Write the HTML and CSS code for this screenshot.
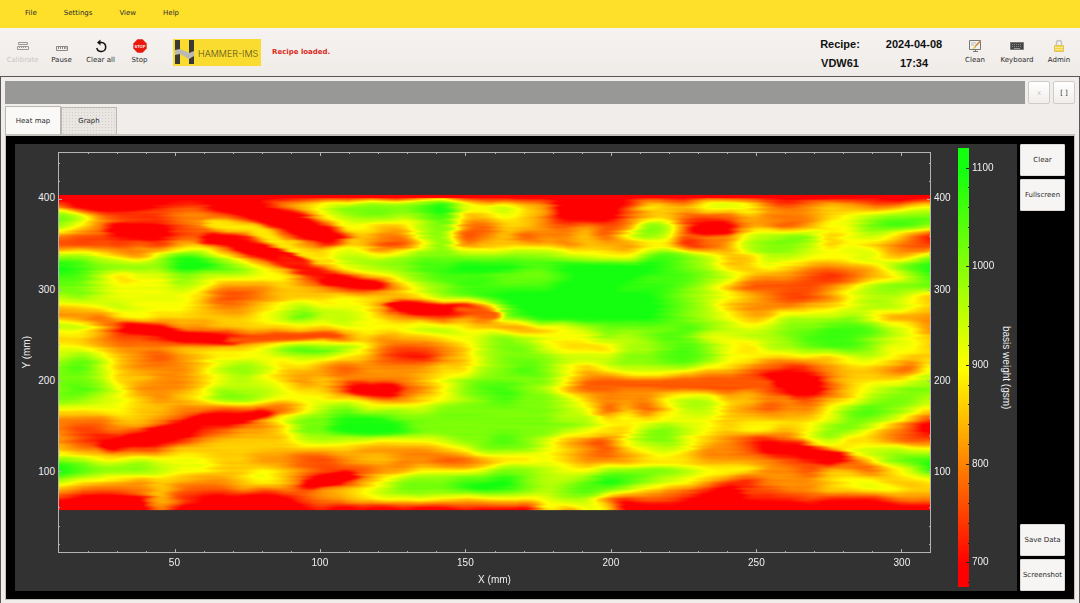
FILE: index.html
```html
<!DOCTYPE html>
<html lang="en">
<head>
    <meta charset="UTF-8">
    <meta name="viewport" content="width=device-width, initial-scale=1.0">
    <title>Hammer-IMS</title>
    <link rel="stylesheet" href="styles.css">
</head>
<body>
    <!-- Menu -->
    <nav class="menu-bar">
        <button type="button">File</button>
        <button type="button">Settings</button>
        <button type="button">View</button>
        <button type="button">Help</button>
    </nav>

    <!-- Toolbar -->
    <header class="toolbar">
        <div class="tools">
            <button type="button" class="tool" disabled>
                <svg width="14" height="14" viewBox="0 0 14 14" fill="none" stroke="#9a9896">
                    <path d="M2.5 3.5h9v2h-9zM1.500 7.500h11v3h-11z"/>
                    <path d="M3.500 7.500v1.500M5.500 7.500v1.500M7.500 7.500v1.500M9.500 7.500v1.500"/>
                </svg>
                <span>Calibrate</span>
            </button>
            <button type="button" class="tool">
                <svg width="14" height="14" viewBox="0 0 14 14" fill="none" stroke="#8a8886">
                    <path d="M1.500 7.500h11v4h-11z"/>
                    <path d="M3.500 8v2M5.500 8v2M7.500 8v2M9.500 8v2M11 8v2"/>
                </svg>
                <span>Pause</span>
            </button>
            <button type="button" class="tool">
                <svg width="14" height="14" viewBox="0 0 14 14" fill="none" stroke="#111" stroke-width="1.500">
                    <path d="M6 3.500h1.500a4.500 4.500 0 1 1-4.700 5.500"/>
                    <path d="M6.500 .4v6.200L3 3.500z" fill="#111" stroke="none"/>
                </svg>
                <span>Clear all</span>
            </button>
            <button type="button" class="tool">
                <svg width="14" height="14" viewBox="0 0 14 14">
                    <path d="M4.500.3h5l4.200 4.200v5l-4.200 4.200h-5L.3 9.500v-5z" fill="#e8180c"/>
                    <text class="stop-sign" x="7" y="9" text-anchor="middle">STOP</text>
                </svg>
                <span>Stop</span>
            </button>
        </div>

        <div class="logo">
            <svg width="22" height="26" viewBox="0 0 22 26">
                <path d="M2 1h5v24H2zM16 1h5v24h-5z" fill="#3a3935"/>
                <path d="M2 11l5-1 9 4 5-2v5l-5 3-9-5-5 1z" fill="#b9b8b2"/>
            </svg>
            <span>HAMMER-IMS</span>
        </div>

        <p class="message">Recipe loaded.</p>

        <div class="info">
            <span>Recipe:</span>
            <span>VDW61</span>
        </div>
        <div class="info date">
            <span>2024-04-08</span>
            <span>17:34</span>
        </div>

        <div class="tools tools-right">
            <button type="button" class="tool">
                <svg width="14" height="14" viewBox="0 0 14 14">
                    <path d="M1.500 1.500h11v9h-11z" fill="#f3f2ee" stroke="#777"/>
                    <path d="M5 12.500h5M7.500 10.500v2" stroke="#777"/>
                    <path d="M3 4h5M3 6h3" stroke="#bbb"/>
                    <path d="M12.500 2L7 7.500" stroke="#c9802f" stroke-width="1.500"/>
                    <path d="M7.500 6.500L4 10l4-1z" fill="#e4bd4a"/>
                </svg>
                <span>Clean</span>
            </button>
            <button type="button" class="tool">
                <svg width="14" height="14" viewBox="0 0 14 14">
                    <path d="M.5 3.500h13v7H.5z" fill="#454545" stroke="#777"/>
                    <path d="M2 5.500h10M2 7.500h10" stroke="#888" stroke-dasharray="1 1"/>
                    <path d="M4 9.500h6" stroke="#999"/>
                </svg>
                <span>Keyboard</span>
            </button>
            <button type="button" class="tool">
                <svg width="14" height="14" viewBox="0 0 14 14">
                    <path d="M4.500 7V4a2.500 2.500 0 0 1 5 0V7" fill="none" stroke="#c4c2bd" stroke-width="1.500"/>
                    <path d="M2.500 6.500h9v6h-9z" fill="#f5d441" stroke="#dfc463"/>
                    <path d="M3 8.500h8M3 10.500h8" stroke="#fae98b"/>
                </svg>
                <span>Admin</span>
            </button>
        </div>
    </header>

    <!-- Work area -->
    <main class="workspace">
        <div class="status-row">
            <div class="status-strip"></div>
            <button type="button" disabled>x</button>
            <button type="button">[ ]</button>
        </div>

        <div class="tabs" role="tablist">
            <button type="button" class="tab active" role="tab" aria-selected="true">Heat map</button>
            <button type="button" class="tab" role="tab" aria-selected="false">Graph</button>
        </div>

        <section class="view">
            <div class="plot">
                <div class="axis-title y-title">Y (mm)</div>
                <div class="axis y-axis y-left"></div>
                <canvas class="field" id="field" width="871" height="400"></canvas>
                <div class="axis y-axis y-right"></div>
                <div class="axis x-axis"></div>
                <div class="axis-title x-title">X (mm)</div>
                <canvas class="scale" id="scale" width="11" height="439"></canvas>
                <div class="axis scale-axis"></div>
                <div class="axis-title scale-title">basis weight (gsm)</div>
            </div>
            <div class="actions">
                <button type="button">Clear</button>
                <button type="button">Fullscreen</button>
                <button type="button" class="push-down">Save Data</button>
                <button type="button">Screenshot</button>
            </div>
        </section>
    </main>

    <script src="heatmap.js"></script>
</body>
</html>
```
FILE: styles.css
```css
* {
    margin: 0;
    padding: 0;
    box-sizing: border-box;
}

body {
    display: flex;
    flex-direction: column;
    height: 100vh;
    overflow: hidden;
    font-family: "DejaVu Sans", sans-serif;
    font-size: 7px;
    color: #2b2b2b;
    background-color: #f0edea;
}

button {
    font: inherit;
    color: inherit;
    border: none;
    background: none;
    cursor: pointer;
}

/* Menu */
.menu-bar {
    display: flex;
    gap: 25px;
    height: 28px;
    flex: none;
    padding: 0 24px 3px;
    background-color: #fee02b;
}

.menu-bar button {
    padding: 0 1px;
}

/* Toolbar */
.toolbar {
    display: flex;
    align-items: center;
    height: 48px;
    flex: none;
    padding-left: 3px;
    background: linear-gradient(#f5f2f0, #efece8);
}

.tools {
    display: flex;
}

.tool {
    display: flex;
    flex-direction: column;
    align-items: center;
    gap: 2px;
    width: 39px;
    white-space: nowrap;
}

.tool span {
    line-height: 10px;
}

.tool:disabled {
    color: #c9c6c3;
}

.stop-sign {
    font: bold 4px "Liberation Sans", sans-serif;
    fill: #fff;
}

.logo {
    display: flex;
    align-items: center;
    gap: 3px;
    width: 88px;
    height: 27px;
    margin-left: 14px;
    font-family: Inter, sans-serif;
    font-size: 9px;
    font-weight: 300;
    line-height: 27px;
    white-space: nowrap;
    color: #57501f;
    background-color: #fadb30;
}

.logo svg {
    flex: none;
}

.logo span {
    padding-top: 3px;
}

.message {
    margin-left: 11px;
    font-weight: bold;
    color: #dc2a22;
}

.info {
    display: flex;
    flex-direction: column;
    align-items: center;
    gap: 3px;
    width: 68px;
    padding-top: 2px;
    margin-left: auto;
    font-family: "Liberation Sans", sans-serif;
    font-size: 11px;
    font-weight: bold;
    line-height: 16px;
    color: #111;
}

.date {
    width: 80px;
    margin-left: 0;
}

.tools-right .tool {
    width: 42px;
}

/* Work area */
.workspace {
    display: flex;
    flex-direction: column;
    flex: 1;
    min-height: 0;
    padding: 4px 4px 3px;
    border: 1px solid #5a5856;
    border-bottom: none;
}

.status-row {
    display: flex;
    gap: 3px;
    height: 23px;
    flex: none;
}

.status-strip {
    flex: 1;
    background-color: #989896;
}

.status-row button {
    width: 22px;
    border: 1px solid #cfccc8;
    border-radius: 2px;
    background: linear-gradient(#fff, #f1eeeb);
}

.status-row button:disabled {
    color: #c9c6c3;
}

.tabs {
    display: flex;
    align-items: flex-end;
    height: 31px;
    flex: none;
    border-bottom: 1px solid #c4c1bd;
}

.tab {
    width: 56px;
    height: 27px;
    border: 1px solid #bab7b3;
    border-bottom: none;
    background: radial-gradient(#d3d0cb 25%, transparent 30%) 0 0 / 3px 3px #e9e6e2;
}

.tab.active {
    height: 28px;
    background: #fbf9f8;
}

/* Plot and its buttons */
.view {
    display: flex;
    gap: 3px;
    flex: 1;
    min-height: 0;
    padding: 8px 9px 8px;
    border: 1px solid #c4c1bd;
    background-color: #000;
}

.plot {
    display: grid;
    grid-template-columns: 23px 20px 1fr 27px 11px 26px 22px;
    grid-template-rows: 4px 4px 1fr 4px 16px 14px 4px;
    flex: 1;
    min-width: 0;
    font-family: "Liberation Sans", sans-serif;
    font-size: 10px;
    line-height: 12px;
    color: #f0f0f0;
    background-color: #323232;
}

.field {
    grid-area: 3 / 3;
    width: 100%;
    height: 100%;
    min-height: 0;
    border: 1px solid #b4b4b4;
}

.axis {
    position: relative;
}

/* Tick labels sit at the place of their value along the axis */
.axis span {
    position: absolute;
}

.y-left {
    grid-area: 3 / 2;
}

.y-right {
    grid-area: 3 / 4;
}

.y-axis span,
.scale-axis span {
    left: 3px;
    transform: translateY(-50%);
}

.y-left span {
    left: auto;
    right: 3px;
}

.x-axis {
    grid-area: 5 / 3;
}

.x-axis span {
    transform: translateX(-50%);
}

.axis-title {
    align-self: center;
    justify-self: center;
}

.y-title {
    grid-area: 3 / 1;
    writing-mode: vertical-rl;
    transform: rotate(180deg);
}

.x-title {
    grid-area: 6 / 3;
}

.scale {
    grid-area: 2 / 5 / 7 / 6;
    width: 100%;
    height: 100%;
    min-height: 0;
}

.scale-axis {
    grid-area: 2 / 6 / 7 / 7;
}

.scale-title {
    grid-area: 2 / 7 / 7 / 8;
    writing-mode: vertical-rl;
}

.actions {
    display: flex;
    flex-direction: column;
    gap: 3px;
    width: 45px;
}

.actions button {
    height: 32px;
    border: 1px solid #dcd9d6;
    border-radius: 1px;
    background-color: #f7f5f3;
    white-space: nowrap;
}

.actions .push-down {
    margin-top: auto;
}
```
FILE: heatmap.js
```js
// Axis ranges
const X_RANGE = [10, 310];
const Y_RANGE = [11, 451];
const W_RANGE = [675, 1120];
const SCAN_Y = [57, 405];

// Measured weight, one row per scan line, 0 = light (red), 9 = heavy (green)
const rows = [
    '00000000000000000000000000000000000000000000',
    '30000122002345777789656430102544665323433344',
    '76322233210025677678445430002342234333456777',
    '75321123444102554467324432323762113323557887',
    '32211122113320343367234233425762335677456531',
    '22223244211243442257344443443441236776454322',
    '77543688531025665677777776655787644665556446',
    '98777799875313567788999889999987644543334689',
    '88645576555521134678887778999888764332123468',
    '77655565333443102467888889998887642222346777',
    '67655554223444544456789999999987654322356654',
    '44565554334565553000137999999987643334456654',
    '33245444445686654322327899999987654466675333',
    '66410133444444555566543345677778765677888653',
    '44322100012222243445567655576787556678887654',
    '55433344445788753223467754446678754667887554',
    '67643234555565442113467776667788755444456544',
    '78643334676443233334467875456666543212344325',
    '77644334565434333345677775333333222110344456',
    '78753334666544210235788764223322223210245677',
    '77654345776555443345678776433356644332346776',
    '55554433222246766667777776524246643233578765',
    '33344321013577888777777776645455544444577642',
    '32233101233477899877777777654676545545775320',
    '32110013444466665556778764325775432125644322',
    '43322344444444433334577754324565332011356655',
    '76556555443322344332234454333444333322124788',
    '98777655445432223344457765577776555332432469',
    '65543443345420035777889766798765431333455445',
    '33223422232323456777898767876433102233445544',
    '10000421000023345444444456631221001112111233',
    '00000300000001010100100053550000000000000000'
];

// Bands that run across the scan lines: level, half width, then x,y points
const bands = [
    [0, 6, 242, 205, 281, 218, 317, 233, 326, 237],
    [4.4, 4, 218, 224, 250, 228, 285, 244, 318, 258],
    [0, 4, 214, 238, 253, 248, 283, 257],
    [0.8, 4, 283, 257, 310, 270, 330, 276],
    [0, 4, 335, 278, 352, 281, 370, 284],
    [0, 4, 402, 306, 430, 308, 455, 309],
    [2, 3, 460, 309, 490, 315],
    [0, 4, 133, 325, 155, 328, 187, 336, 228, 339],
    [1.8, 3, 233, 338, 290, 336, 330, 334],
    [0, 4, 112, 445, 133, 440, 157, 433, 180, 424, 207, 419, 240, 418, 260, 413],
    [0, 4, 313, 483, 330, 479, 342, 476],
    [0, 5, 364, 388, 382, 388],
    [0, 5, 124, 228, 149, 230],
    [0, 6, 784, 379, 798, 388],
    [0, 5, 797, 447, 812, 452, 832, 456],
    [0, 4, 704, 228, 720, 227],
    [2, 4, 600, 384, 680, 384, 760, 382],
    [9, 6, 350, 425, 386, 426]
];

function noise(x, y) {
    const cell = (a, b) => {
        const n = Math.sin(a * 127.1 + b * 311.7) * 43758.5453;
        return n - Math.floor(n);
    };
    const ix = Math.floor(x);
    const iy = Math.floor(y);
    const fx = x - ix;
    const fy = y - iy;
    const top = cell(ix, iy) * (1 - fx) + cell(ix + 1, iy) * fx;
    const low = cell(ix, iy + 1) * (1 - fx) + cell(ix + 1, iy + 1) * fx;
    return top * (1 - fy) + low * fy - 0.5;
}

// Halfway between an interpolating and a smoothing spline
function cubic(a, b, c, d, t) {
    const sharp = b + 0.5 * t * (c - a + t * (2 * a - 5 * b + 4 * c - d + t * (3 * (b - c) + d - a)));
    const t2 = t * t;
    const t3 = t2 * t;
    const soft = ((1 - t) ** 3 * a + (3 * t3 - 6 * t2 + 4) * b + (3 * t + 3 * t2 - 3 * t3 + 1) * c + t3 * d) / 6;
    return (sharp + soft) / 2;
}

function level(col, row) {
    const r = Math.max(0, Math.min(rows.length - 1, row));
    const c = Math.max(0, Math.min(rows[r].length - 1, col));
    return Number(rows[r][c]);
}

// u and v run from 0 to 1 over the scanned area
function gridValue(u, v) {
    const gx = u * (rows[0].length - 1);
    const gy = v * (rows.length - 1);
    const c = Math.floor(gx);
    const r = Math.floor(gy);
    const line = [-1, 0, 1, 2].map(k => cubic(
        level(c - 1, r + k), level(c, r + k), level(c + 1, r + k), level(c + 2, r + k), gx - c
    ));
    return cubic(line[0], line[1], line[2], line[3], gy - r);
}

function bandDistance(points, x, y) {
    let best = 1000;
    for (let i = 0; i + 3 < points.length; i += 2) {
        const dx = points[i + 2] - points[i];
        const dy = points[i + 3] - points[i + 1];
        const t = Math.max(0, Math.min(1, ((x - points[i]) * dx + (y - points[i + 1]) * dy) / (dx * dx + dy * dy)));
        // stretched along the scan direction
        const ex = (x - points[i] - t * dx) / 2.5;
        const ey = y - points[i + 1] - t * dy;
        best = Math.min(best, Math.hypot(ex, ey));
    }
    return best;
}

function color(value) {
    const t = Math.max(0, Math.min(1, (value - 0.5) / 8.6));
    if (t < 0.5) {
        return [255, Math.round(t * 510), 0];
    }
    return [Math.round(255 - (t - 0.5) * 470), 255, Math.round((t - 0.5) * 30)];
}

function drawField() {
    const canvas = document.getElementById('field');
    const ctx = canvas.getContext('2d');
    const w = canvas.width;
    const h = canvas.height;
    const yPos = y => (Y_RANGE[1] - y) / (Y_RANGE[1] - Y_RANGE[0]) * h;
    const xPos = x => (x - X_RANGE[0]) / (X_RANGE[1] - X_RANGE[0]) * w;
    const top = Math.round(yPos(SCAN_Y[1]));
    const height = Math.round(yPos(SCAN_Y[0])) - top;
    const image = ctx.createImageData(w, height);

    for (let y = 0; y < height; y++) {
        for (let x = 0; x < w; x++) {
            const sx = x + noise(x / 30, y / 2) * 9;
            const sy = y + noise(x / 24 + 50, y / 9) * 4;
            let value = gridValue(Math.max(0, Math.min(1, sx / w)), Math.max(0, Math.min(1, sy / height)));
            // contrast lost by the smoothing spline
            value = 4.7 + (value - 4.7) * 1.1;
            bands.forEach(([target, half, ...points]) => {
                const d = bandDistance(points, sx + 59, sy + 194);
                const mix = Math.max(0, Math.min(1, (half * 2.2 - d) / (half * 2)));
                value += (target - value) * mix * mix * (3 - 2 * mix);
            });
            value += noise(x / 45 + 9, y / 1.7) * 0.45;
            if (y < 3) {
                value = 0;
            }
            const i = (y * w + x) * 4;
            const rgb = color(value);
            image.data[i] = rgb[0];
            image.data[i + 1] = rgb[1];
            image.data[i + 2] = rgb[2];
            image.data[i + 3] = 255;
        }
    }
    ctx.putImageData(image, 0, top);

    // Ticks on all four sides
    ctx.fillStyle = '#b4b4b4';
    for (let x = 20; x < 310; x += 10) {
        const size = x % 50 === 0 ? 3 : 1;
        ctx.fillRect(Math.round(xPos(x)), 0, 1, size);
        ctx.fillRect(Math.round(xPos(x)), h - size, 1, size);
    }
    for (let y = 20; y < 450; y += 20) {
        const size = y % 100 === 0 ? 3 : 1;
        ctx.fillRect(0, Math.round(yPos(y)), size, 1);
        ctx.fillRect(w - size, Math.round(yPos(y)), size, 1);
    }
}

function drawScale() {
    const canvas = document.getElementById('scale');
    const ctx = canvas.getContext('2d');
    const h = canvas.height;
    for (let y = 0; y < h; y++) {
        ctx.fillStyle = `rgb(${color((1 - y / h) * 9.6).join(',')})`;
        ctx.fillRect(0, y, 11, 1);
    }
    ctx.fillStyle = '#222';
    for (let g = 680; g < W_RANGE[1]; g += 20) {
        const y = Math.round((W_RANGE[1] - g) / (W_RANGE[1] - W_RANGE[0]) * h);
        ctx.fillRect(g % 100 === 0 ? 8 : 10, y, 4, 1);
    }
}

function addLabels(selector, values, side, place) {
    const axis = document.querySelector(selector);
    values.forEach(value => {
        const label = document.createElement('span');
        label.textContent = value;
        label.style[side] = place(value) * 100 + '%';
        axis.appendChild(label);
    });
}

const share = (value, range) => (value - range[0]) / (range[1] - range[0]);

addLabels('.y-left', [400, 300, 200, 100], 'top', v => 1 - share(v, Y_RANGE));
addLabels('.y-right', [400, 300, 200, 100], 'top', v => 1 - share(v, Y_RANGE));
addLabels('.x-axis', [50, 100, 150, 200, 250, 300], 'left', v => share(v, X_RANGE));
addLabels('.scale-axis', [1100, 1000, 900, 800, 700], 'top', v => 1 - share(v, W_RANGE));
drawField();
drawScale();
```
